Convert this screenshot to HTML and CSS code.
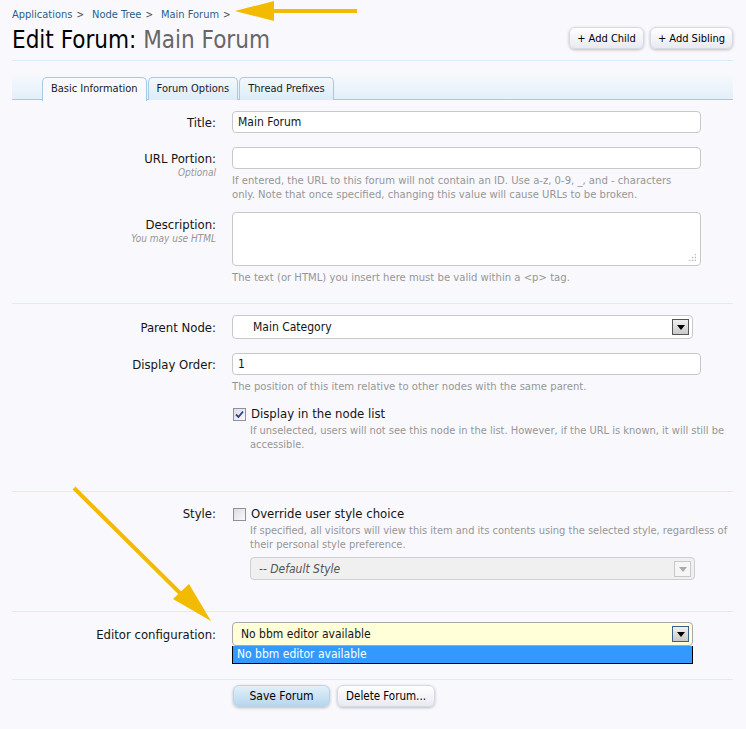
FILE: index.html
```html
<!DOCTYPE html>
<html>
<head>
<meta charset="utf-8">
<link rel="stylesheet" href="styles.css">
</head>
<body>
<div class="page">
  <nav class="crumbs">
    <a>Applications</a><span class="sep">&gt;</span><a>Node Tree</a><span class="sep">&gt;</span><a>Main Forum</a><span class="sep">&gt;</span>
  </nav>
  <div class="titlebar">
    <h1>Edit Forum: <em>Main Forum</em></h1>
    <div class="topctrls">
      <button class="btn">+ Add Child</button>
      <button class="btn">+ Add Sibling</button>
    </div>
  </div>
  <div class="tabband">
    <ul class="tabs">
      <li class="tab active">Basic Information</li>
      <li class="tab">Forum Options</li>
      <li class="tab">Thread Prefixes</li>
    </ul>
  </div>

  <section class="sect s1">
    <div class="row r-title">
      <label class="lbl">Title:</label>
      <div class="ctrl"><div class="input">Main Forum</div></div>
    </div>
    <div class="row r-url">
      <label class="lbl">URL Portion:<span class="hint">Optional</span></label>
      <div class="ctrl"><div class="input"></div>
        <p class="explain">If entered, the URL to this forum will not contain an ID. Use a-z, 0-9, _, and - characters<br>only. Note that once specified, changing this value will cause URLs to be broken.</p>
      </div>
    </div>
    <div class="row r-desc">
      <label class="lbl">Description:<span class="hint">You may use HTML</span></label>
      <div class="ctrl"><div class="input textarea"><span class="grip"></span></div>
        <p class="explain">The text (or HTML) you insert here must be valid within a &lt;p&gt; tag.</p>
      </div>
    </div>
  </section>

  <section class="sect s2">
    <div class="row r-parent">
      <label class="lbl">Parent Node:</label>
      <div class="ctrl"><div class="select indent"><span>Main Category</span><span class="arrow"></span></div></div>
    </div>
    <div class="row r-order">
      <label class="lbl">Display Order:</label>
      <div class="ctrl"><div class="input">1</div>
        <p class="explain">The position of this item relative to other nodes with the same parent.</p>
      </div>
    </div>
    <div class="row r-check">
      <div class="lbl"></div>
      <div class="ctrl">
        <div class="check"><span class="box checked"><svg viewBox="0 0 9 9" width="9" height="9"><path d="M1 4.5 L3.5 7 L8 1.5" fill="none" stroke="#2a3f8f" stroke-width="1.8"/></svg></span>Display in the node list</div>
        <p class="explain indent-check">If unselected, users will not see this node in the list. However, if the URL is known, it will still be<br>accessible.</p>
      </div>
    </div>
  </section>

  <section class="sect s3">
    <div class="row r-style">
      <label class="lbl">Style:</label>
      <div class="ctrl">
        <div class="check"><span class="box"></span>Override user style choice</div>
        <p class="explain indent-check">If specified, all visitors will view this item and its contents using the selected style, regardless of<br>their personal style preference.</p>
        <div class="select disabled"><span>-- Default Style</span><span class="arrow"></span></div>
      </div>
    </div>
  </section>

  <section class="sect s4">
    <div class="row r-editor">
      <label class="lbl">Editor configuration:</label>
      <div class="ctrl">
        <div class="select focus"><span>No bbm editor available</span><span class="arrow"></span></div>
        <div class="dropdown">No bbm editor available</div>
      </div>
    </div>
  </section>

  <div class="submit">
    <button class="btn primary">Save Forum</button>
    <button class="btn del">Delete Forum...</button>
  </div>

  <svg class="annot" width="746" height="729" viewBox="0 0 746 729">
    <line x1="357" y1="11" x2="268" y2="11" stroke="#f2bb00" stroke-width="4"/>
    <polygon points="235,11 274,1 274,21" fill="#f2bb00"/>
    <line x1="74" y1="488" x2="184" y2="597" stroke="#f2bb00" stroke-width="4"/>
    <polygon points="211,621 173,599 189,584" fill="#f2bb00"/>
  </svg>
</div>
</body>
</html>
```

FILE: styles.css
```css
* { box-sizing: border-box; }
html, body { margin: 0; padding: 0; }
body {
  background: #f9f9fd;
  font-family: "DejaVu Sans Condensed", "Liberation Sans Narrow", "DejaVu Sans", sans-serif;
  color: #141414;
  width: 746px;
  height: 729px;
  overflow: hidden;
}
.page { position: relative; padding: 0 13px 0 12px; }
.crumbs { display: flex; font-size: 11px; padding-top: 8px; height: 27px; line-height: 13px; color: #2b5f8c; }
.crumbs a { color: #2b5f8c; }
.crumbs .sep { color: #4a4a4a; margin: 0 8px 0 4px; font-size: 10px; }
.titlebar { display: flex; justify-content: space-between; align-items: flex-start; height: 34px; border-bottom: 1px solid #d7edfc; }
h1 { margin: 0; font-weight: normal; font-size: 24px; line-height: 26px; color: #000; }
h1 em { font-style: normal; color: #666; }
.topctrls { display: flex; gap: 6px; }
.btn {
  font-family: inherit; font-size: 11px; color: #000;
  height: 22px; padding: 0 7px; white-space: nowrap;
  border: 1px solid #d6d9e6; border-radius: 6px;
  background: linear-gradient(#ffffff, #e9e9f2);
  box-shadow: 0 1px 3px rgba(0,0,0,0.25);
}
.tabband {
  height: 39px; padding: 16px 0 0 30px;
  background: linear-gradient(#f9f9fd 30%, #e3effa);
  border-bottom: 1px solid #a5cae4;
}
.tabs { list-style: none; margin: 0; padding: 0; display: flex; }
.tab {
  font-size: 11px; height: 23px; line-height: 22px; padding: 0 8px;
  border: 1px solid #a5cae4; border-bottom: none; border-radius: 5px 5px 0 0;
  background: linear-gradient(#f2f8fd, #dcecf9);
  margin-right: 1px; color: #1a1a1a;
}
.tab.active { background: #f9f9fd; height: 24px; margin-bottom: -1px; }
.sect { border-bottom: 1px solid #d7edfc; }
.row { display: grid; grid-template-columns: 204px 1fr; column-gap: 16px; }
.lbl { text-align: right; font-size: 13px; color: #141414; padding-top: 4px; line-height: 15px; }
.hint { display: block; font-size: 10px; font-style: italic; color: #969696; line-height: 14px; }
.input {
  width: 469px; height: 22px; background: #fff;
  border: 1px solid #c8c8c8; border-radius: 4px;
  font-size: 12px; line-height: 20px; padding: 0 5px;
}
.textarea { height: 54px; position: relative; }
.grip {
  position: absolute; right: 4px; bottom: 4px; width: 8px; height: 8px;
  background: radial-gradient(circle, #bbb 0.8px, transparent 1.1px) 0 0 / 3px 3px;
  clip-path: polygon(100% 0, 100% 100%, 0 100%);
}
.explain { margin: 5px 0 0; font-size: 11.2px; line-height: 14px; color: #969696; white-space: nowrap; }
.s1 { padding: 11px 0 18px; }
.r-title { margin-bottom: 14px; }
.r-url { margin-bottom: 10px; }
.r-desc .lbl { padding-top: 5px; }
.s2 { padding: 11px 0 39px; }
.r-parent { margin-bottom: 14px; }
.select {
  width: 461px; height: 24px; background: #fff;
  border: 1px solid #c8c8c8; border-radius: 4px;
  font-size: 12px; line-height: 22px; padding: 0 3px 0 8px;
  display: flex; justify-content: space-between; align-items: center;
}
.select.indent { padding-left: 20px; }
.arrow {
  width: 17px; height: 16px; border: 1px solid #555;
  background: linear-gradient(#f0f0f0, #c9c9c9);
  position: relative;
}
.arrow::after {
  content: ""; position: absolute; left: 4px; top: 5px;
  border-left: 4px solid transparent; border-right: 4px solid transparent; border-top: 5px solid #000;
}
.r-parent .lbl, .r-editor .lbl { padding-top: 5px; }
.r-check { margin-top: 12px; }
.check { display: flex; align-items: center; font-size: 13px; line-height: 16px; color: #141414; }
.box {
  width: 13px; height: 13px; margin: 0 5px 0 1px; border: 1px solid #8f8f9d;
  background: linear-gradient(135deg, #dcdce4, #fafafa);
  display: inline-flex; align-items: center; justify-content: center;
}
.explain.indent-check { margin-left: 18px; margin-top: 2px; font-size: 11px; }
.s3 { padding: 14px 0 31px; }
.r-style .lbl { padding-top: 0; line-height: 16px; }
.select.disabled {
  margin: 5px 0 0 18px; width: 445px; height: 23px; background: #f0f0f1;
  border-color: #cfcfcf; color: #555; font-style: italic;
}
.select.disabled .arrow { border-color: #c8c8c8; background: #f6f6f6; }
.select.disabled .arrow::after { border-top-color: #aaa; }
.s4 { padding: 10px 0 15px; }
.select.focus { background: #ffffd8; border-color: #a9a9a9; padding-left: 8px; }
.select.focus .arrow { border-color: #3c5f8f; }
.dropdown {
  width: 461px; height: 18px; background: #3399ff; color: #fff;
  border: 1px solid #000; border-top: none;
  font-size: 12px; line-height: 16px; padding-left: 4px;
}
.submit { padding: 5px 0 0 221px; display: flex; gap: 7px; }
.submit .btn { height: 22px; font-size: 12px; }
.btn.primary { width: 97px; background: linear-gradient(#e4f0fa, #b5d6ee); border-color: #bcd3e6; }
.btn.del { width: 98px; padding: 0 4px; font-size: 11.5px; }
.annot { position: absolute; left: 0; top: 0; pointer-events: none; }
```
